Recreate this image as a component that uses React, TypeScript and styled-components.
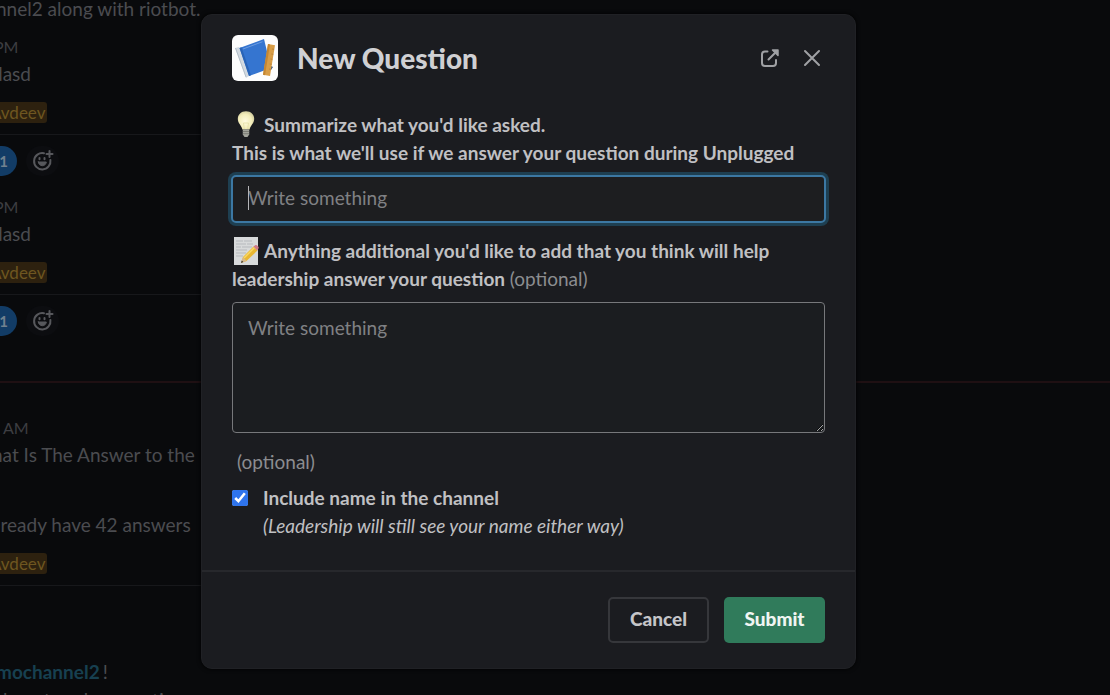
import React from "react";
import styled, { createGlobalStyle } from "styled-components";

const GlobalStyle = createGlobalStyle`
  * { box-sizing: border-box; }
  body {
    margin: 0;
    background: #090a0c;
    font-family: Lato, "Liberation Sans", sans-serif;
    font-size: 19px;
    line-height: 28px;
  }
  button, input, textarea { font: inherit; }
`;

const Page = styled.div`
  display: grid;
  grid-template-columns: minmax(0, 1fr);
  height: 100vh;
  overflow: hidden;
`;

const Feed = styled.main`
  grid-area: 1 / 1;
  min-height: 0;
  color: #4b4c50;
  white-space: nowrap;
  overflow: hidden;
`;

const Message = styled.article<{ $height: number }>`
  display: flow-root;
  height: ${(p) => p.$height}px;
`;

const Line = styled.p<{ $gap?: number; $shift?: number }>`
  margin: ${(p) => p.$gap ?? 0}px 0 0 ${(p) => p.$shift ?? -4}px;
`;

const Time = styled.time<{ $gap?: number; $shift?: number }>`
  display: block;
  margin: ${(p) => p.$gap ?? 0}px 0 0 ${(p) => p.$shift ?? -6}px;
  color: #3d3e42;
  font-size: 16px;
  line-height: 26px;
`;

const Mention = styled.mark`
  display: block;
  width: max-content;
  margin: 14px 0 0 -12px;
  padding: 0 2px;
  border-radius: 3px;
  background: #2d210f;
  color: #6e5620;
  font-size: 17px;
  line-height: 21px;
`;

const ChannelLink = styled.a`
  margin-right: 3px;
  color: #174050;
  font-weight: 700;
  text-decoration: none;
`;

const Divider = styled.hr`
  width: 201px;
  height: 1px;
  margin: 11px 0 0;
  border: 0;
  background: #17181b;
`;

const Unread = styled.hr`
  height: 2px;
  margin: 0;
  border: 0;
  background: #1f1013;
`;

const Reactions = styled.div`
  display: flex;
  align-items: center;
  gap: 9px;
  margin-top: 11px;
`;

const Count = styled.button`
  width: 32px;
  height: 30px;
  margin-left: -15px;
  padding: 0 9px 0 0;
  border: 0;
  border-radius: 15px;
  background: #123c66;
  color: #71818f;
  font-size: 15px;
  font-weight: 700;
  text-align: right;
`;

const AddReaction = styled.button`
  display: flex;
  align-items: center;
  justify-content: center;
  width: 33px;
  height: 30px;
  padding: 0;
  border: 0;
  border-radius: 15px;
  background: #0c0d10;
  color: #57585c;
`;

const Overlay = styled.div`
  grid-area: 1 / 1;
  display: flex;
  justify-content: center;
  align-items: flex-start;
  padding: 14px 53px 0 0;
`;

const Dialog = styled.form`
  position: relative;
  width: 100%;
  max-width: 655px;
  border: 1px solid #202125;
  border-radius: 11px;
  background: #1b1c20;
  color: #c0c0c3;
  box-shadow: 0 0 4px #000;
`;

const Header = styled.header`
  display: flex;
  align-items: center;
  padding: 20px 22px 0 30px;
`;

const AppIcon = styled.svg`
  flex: none;
  width: 46px;
  height: 46px;
`;

const Title = styled.h1`
  flex: 1;
  margin: 0 0 0 19px;
  color: #d0d0d3;
  font-size: 28px;
  font-weight: 900;
  line-height: 36px;
`;

const IconButton = styled.button`
  display: flex;
  align-items: center;
  justify-content: center;
  width: 42px;
  height: 42px;
  padding: 0;
  border: 0;
  background: none;
  color: #a0a1a4;
`;

const Body = styled.div`
  padding: 30px;
`;

const Label = styled.label`
  display: block;
  font-weight: 700;
`;

const Emoji = styled.svg`
  width: 28px;
  height: 28px;
  margin-right: 4px;
  vertical-align: top;
`;

const Optional = styled.span`
  color: #8c8d90;
  font-weight: 400;
`;

const InputWrap = styled.div`
  position: relative;
  margin: 8px -1px 14px;
`;

const TextInput = styled.input`
  display: block;
  width: 100%;
  height: 48px;
  padding: 0 15px 3px;
  border: 2px solid #3c78a3;
  border-radius: 5px;
  outline: none;
  background: #1d1e20;
  color: #d0d0d3;
  box-shadow: 0 0 0 3px #1e3f51;
  &::placeholder { color: #808184; }
`;

const Caret = styled.span`
  position: absolute;
  top: 11px;
  left: 17px;
  width: 1px;
  height: 24px;
  background: #b5b5b8;
`;

const TextArea = styled.textarea`
  display: block;
  width: 100%;
  height: 131px;
  margin: 9px 0 15px;
  padding: 11px 15px;
  border: 1px solid #77787b;
  border-radius: 4px;
  outline: none;
  background: #1b1d20;
  color: #d0d0d3;
  color-scheme: dark;
  resize: vertical;
  &::placeholder { color: #808184; }
`;

const Legend = styled.p`
  margin: 0 0 8px 5px;
`;

const CheckRow = styled.label`
  display: flex;
  align-items: flex-start;
  gap: 15px;
  font-weight: 700;
`;

const Checkbox = styled.input`
  flex: none;
  width: 16px;
  height: 16px;
  margin: 6px 0 0;
  accent-color: #2f74ec;
`;

const Hint = styled.em`
  display: block;
  font-weight: 400;
`;

const Footer = styled.footer`
  display: flex;
  justify-content: flex-end;
  gap: 15px;
  padding: 25px 30px;
  border-top: 2px solid #27282c;
`;

const Button = styled.button<{ $primary?: boolean }>`
  height: 46px;
  min-width: 101px;
  padding: 0 18px 2px;
  border: ${(p) => (p.$primary ? "0" : "2px solid #36373b")};
  border-radius: 5px;
  background: ${(p) => (p.$primary ? "#307b5b" : "#1b1c20")};
  color: ${(p) => (p.$primary ? "#f0f5f2" : "#c5c5c8")};
  font-weight: 900;
`;

const ReactIcon = () => (
  <svg width="22" height="22" viewBox="0 0 22 22" fill="none" stroke="currentColor" strokeWidth="2" strokeLinecap="round">
    <path d="M12 3.2A8.2 8.2 0 1 0 18.4 10" />
    <path d="M17.5 1v6M14.5 4h6" />
    <path d="M7.5 8v1.2M12.5 8v1.2" />
    <path d="M6.3 12h8c-.5 5-7.5 5-8 0z" fill="currentColor" strokeWidth="1" />
  </svg>
);

const ReactionRow = () => (
  <Reactions>
    <Count type="button">1</Count>
    <AddReaction type="button" aria-label="Add reaction"><ReactIcon /></AddReaction>
  </Reactions>
);

const BookIcon = () => (
  <AppIcon viewBox="0 0 46 46" aria-hidden="true">
    <rect width="46" height="46" rx="6" fill="#fdfdfd" />
    <path d="M3 13l4-1 10 29-3 2z" fill="#d3dae1" />
    <path d="M3.500 13l10.500 29" stroke="#a3b1bf" strokeWidth=".7" />
    <path d="M37 30l4 2-2 3z" fill="#31517d" />
    <path d="M7.500 13L32 4l7 29-22 8z" fill="#3575d0" />
    <path d="M7.500 13l2-.8L19 40.300l-2 .7z" fill="#2a64b6" />
    <path d="M11 14l19.500-7.300" stroke="#6b9be0" strokeWidth="1" />
    <path d="M36 9l7 1.200L38 41l-7-1.200z" fill="#d89d47" />
    <path d="M36 9l2 .4-5 30.800-2-.4z" fill="#c48632" />
    <path d="M40 14l2 .3M39.300 19l2 .3M38.500 24l2 .3M37.700 29l2 .3M37 34l2 .3" stroke="#a8742e" strokeWidth=".6" />
  </AppIcon>
);

const BulbIcon = () => (
  <Emoji viewBox="0 0 28 28" aria-hidden="true">
    <defs>
      <radialGradient id="bulb" cx=".45" cy=".55" r=".6">
        <stop offset="0" stopColor="#fffbe0" />
        <stop offset=".65" stopColor="#f3edba" />
        <stop offset="1" stopColor="#cfc99b" />
      </radialGradient>
    </defs>
    <path d="M14 .3c-5 0-8.200 3.300-8.200 7.500 0 4.600 3.400 6 4.600 10.700h7.200c1.200-4.700 4.600-6.100 4.600-10.700C22.200 3.600 19 .3 14 .3z" fill="url(#bulb)" />
    <path d="M10.800 18.500h6.400v5L15.500 26h-3l-1.700-2.500z" fill="#a3a49c" />
    <path d="M10.800 20.500h6.400M10.800 22.700h6.400" stroke="#72736b" strokeWidth=".8" />
    <path d="M12.300 18l-.8-6h5l-.8 6" stroke="#e3dca0" fill="none" strokeWidth=".7" />
  </Emoji>
);

const MemoIcon = () => (
  <Emoji viewBox="0 0 28 28" aria-hidden="true">
    <path d="M2 0h24v28H2z" fill="#d8dadb" />
    <path d="M4 4h7m1 0h8M4 7h10m1 0h6M4 10h5m1 0h10M4 13h11M4 16h10M4 19h7" stroke="#b3b6ba" strokeWidth=".9" />
    <path d="M9 26l2-6L21.500 9.500l4 4L14.500 24z" fill="#e9b732" />
    <path d="M12 21L22.500 10.500" stroke="#f8d863" strokeWidth="1.500" />
    <path d="M21.500 9.500L23.500 8c1-.6 3.600 1.600 3.200 3l-1.500 2.500z" fill="#ce7a88" />
    <path d="M9 26l2-6 3.500 4z" fill="#d8b98b" />
    <path d="M9 26l.8-2.500 1.500 1.600z" fill="#333" />
  </Emoji>
);

const OpenIcon = () => (
  <svg width="20" height="20" viewBox="0 0 20 20" fill="none" stroke="currentColor" strokeWidth="2" strokeLinecap="round" strokeLinejoin="round">
    <path d="M7.500 3.500H5A3 3 0 0 0 2 6.500V15a3 3 0 0 0 3 3h8a3 3 0 0 0 3-3v-3" />
    <path d="M15 5L8.500 11.500" />
    <path d="M12.500 2H18v5.500z" fill="currentColor" strokeWidth="1.500" />
  </svg>
);

const CloseIcon = () => (
  <svg width="18" height="18" viewBox="0 0 18 18" fill="none" stroke="currentColor" strokeWidth="2" strokeLinecap="round">
    <path d="M2 2l14 14M16 2L2 16" />
  </svg>
);

export default function App() {
  return (
    <>
      <GlobalStyle />
      <Page>
        <Feed>
          <Message $height={34}>
            <Line $gap={-5}>nnel2 along with riotbot.</Line>
          </Message>
          <Message $height={160}>
            <Time>PM</Time>
            <Line $shift={-8}>dasd</Line>
            <Mention>Avdeev</Mention>
            <Divider />
            <ReactionRow />
          </Message>
          <Message $height={187}>
            <Time>PM</Time>
            <Line $shift={-8}>dasd</Line>
            <Mention>Avdeev</Mention>
            <Divider />
            <ReactionRow />
          </Message>
          <Unread />
          <Message $height={275}>
            <Time $gap={32} $shift={3}>AM</Time>
            <Line $shift={-8}>hat Is The Answer to the</Line>
            <Line $gap={42}>lready have 42 answers</Line>
            <Mention>Avdeev</Mention>
            <Divider />
          </Message>
          <Line><ChannelLink href="#channel">mochannel2</ChannelLink>!</Line>
          <Line $shift={3}>how to ask a question</Line>
        </Feed>

        <Overlay>
          <Dialog role="dialog" aria-labelledby="title" onSubmit={(e) => e.preventDefault()}>
            <Header>
              <BookIcon />
              <Title id="title">New Question</Title>
              <IconButton type="button" aria-label="Open in new window"><OpenIcon /></IconButton>
              <IconButton type="button" aria-label="Close"><CloseIcon /></IconButton>
            </Header>
            <Body>
              <Label htmlFor="summary">
                <BulbIcon />Summarize what you'd like asked.<br />
                This is what we'll use if we answer your question during Unplugged
              </Label>
              <InputWrap>
                <TextInput id="summary" placeholder="Write something" />
                <Caret />
              </InputWrap>
              <Label htmlFor="details">
                <MemoIcon />Anything additional you'd like to add that you think will help leadership answer your question <Optional>(optional)</Optional>
              </Label>
              <TextArea id="details" placeholder="Write something" />
              <Legend><Optional>(optional)</Optional></Legend>
              <CheckRow>
                <Checkbox type="checkbox" defaultChecked />
                <span>
                  Include name in the channel
                  <Hint>(Leadership will still see your name either way)</Hint>
                </span>
              </CheckRow>
            </Body>
            <Footer>
              <Button type="button">Cancel</Button>
              <Button type="submit" $primary>Submit</Button>
            </Footer>
          </Dialog>
        </Overlay>
      </Page>
    </>
  );
}
